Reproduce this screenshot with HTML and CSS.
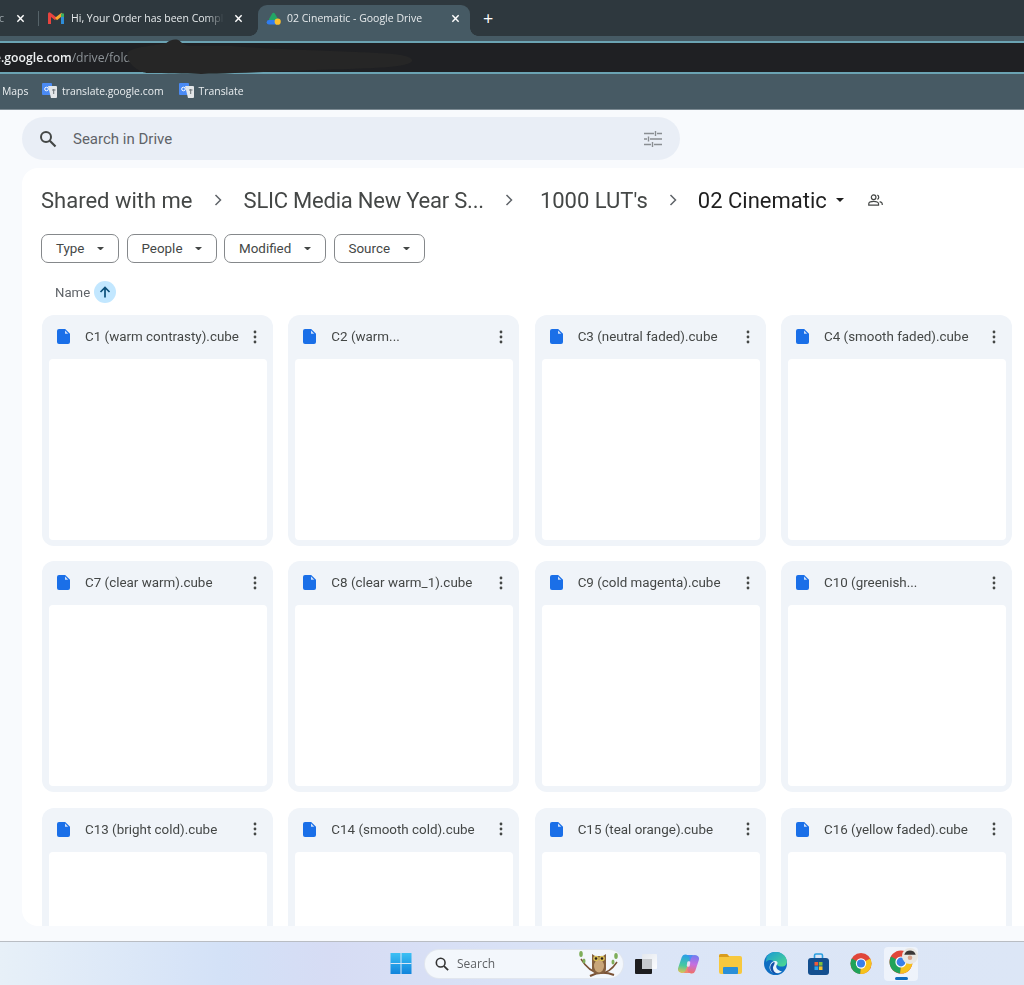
FILE: index.html
```html
<!DOCTYPE html>
<html lang="en">
<head>
<meta charset="utf-8">
<title>02 Cinematic - Google Drive</title>
<link rel="stylesheet" href="styles.css">
</head>
<body>
<svg class="defs" width="0" height="0" aria-hidden="true">
  <defs>
    <linearGradient id="copL" gradientUnits="userSpaceOnUse" x1="8" y1="1" x2="5" y2="20"><stop offset="0" stop-color="#2a9fe8"/><stop offset=".55" stop-color="#45c9a0"/><stop offset="1" stop-color="#f5c147"/></linearGradient>
    <linearGradient id="copR" gradientUnits="userSpaceOnUse" x1="18" y1="1" x2="15" y2="20"><stop offset="0" stop-color="#6f7cf0"/><stop offset=".5" stop-color="#c56fe0"/><stop offset="1" stop-color="#f2705f"/></linearGradient>
    <linearGradient id="edgeG" x1="0" y1="0" x2="1" y2="1"><stop offset="0" stop-color="#1b9ad6"/><stop offset="1" stop-color="#4fdc8c"/></linearGradient>
    <linearGradient id="winG" x1="0" y1="0" x2="0" y2="1"><stop offset="0" stop-color="#3cc0f4"/><stop offset="1" stop-color="#1184dc"/></linearGradient>
    <linearGradient id="backG" x1="0" y1="0" x2="1" y2="1"><stop offset="0" stop-color="#e4e8ee"/><stop offset="1" stop-color="#fbfcfe"/></linearGradient>
  </defs>
  <symbol id="file" viewBox="0 0 13 15"><path d="M2 0h6.200L13 4.800V13a2 2 0 0 1-2 2H2a2 2 0 0 1-2-2V2a2 2 0 0 1 2-2z" fill="#1a6fe8"/><path d="M8 1.500v3.200h3.200z" fill="#cfe0fb"/></symbol>
  <symbol id="kebab" viewBox="0 0 4 14"><circle cx="2" cy="2" r="1.400"/><circle cx="2" cy="7" r="1.400"/><circle cx="2" cy="12" r="1.400"/></symbol>
  <symbol id="caret" viewBox="0 0 8 4"><path d="M0 0h8L4 4z"/></symbol>
  <symbol id="close" viewBox="0 0 10 10"><path d="M1.500 1.500l7 7M8.500 1.500l-7 7" stroke="#fff" stroke-width="1.600" fill="none"/></symbol>
  <symbol id="chev" viewBox="0 0 8 12"><path d="M1.500 1l5 5-5 5" stroke="#5f6368" stroke-width="1.500" fill="none"/></symbol>
  <symbol id="gtrans" viewBox="0 0 15 15"><rect x="0" y="0" width="10" height="12" rx="1" fill="#4a8af4"/><path d="M6 3h8a1 1 0 0 1 1 1v10a1 1 0 0 1-1 1H9z" fill="#e3e6e8"/><circle cx="4.500" cy="6" r="1.800" fill="none" stroke="#fff" stroke-width="1"/><path d="M10 7h3.500M11.700 6v5" stroke="#6b7276" stroke-width="1"/></symbol>
  <symbol id="chrome" viewBox="0 0 24 24"><circle cx="12" cy="12" r="11.500" fill="#e0463a"/><path d="M12 12L22 6.500A11.500 11.500 0 0 1 11 23.500z" fill="#f6c21c"/><path d="M12 12L11 23.500A11.500 11.500 0 0 1 2 6.500z" fill="#1fa35a"/><circle cx="12" cy="12" r="5.600" fill="#fff"/><circle cx="12" cy="12" r="4.400" fill="#3a7fe8"/></symbol>
</svg>

<header class="tabstrip">
  <div class="tab tab-cut"><span class="tab-title">c</span><svg class="tab-x"><use href="#close"/></svg></div>
  <span class="tab-sep"></span>
  <div class="tab tab-mail">
    <svg class="fav" viewBox="0 0 16 13">
      <path d="M1.500 12V1.800L8 7" fill="none" stroke="#e8443f" stroke-width="3" stroke-linejoin="round"/>
      <path d="M8 7l6.500-5.200" fill="none" stroke="#f7a42c" stroke-width="3"/>
      <path d="M14.500 2v10" fill="none" stroke="#2e8cd8" stroke-width="3"/>
      <path d="M14.500 1.500v3.500" fill="none" stroke="#3fae62" stroke-width="3"/>
    </svg>
    <span class="tab-title tab-fade">Hi, Your Order has been Completed</span>
    <svg class="tab-x"><use href="#close"/></svg>
  </div>
  <div class="tab tab-active">
    <svg class="fav" viewBox="0 0 15 13">
      <path d="M7.500 2.200L10.500 7.500H4.500z" fill="#22a565" stroke="#22a565" stroke-width="3" stroke-linejoin="round"/>
      <path d="M3 10.200h7" stroke="#2f7df0" stroke-width="4.600" stroke-linecap="round"/>
      <circle cx="11.700" cy="9.700" r="3.100" fill="#fbc02d"/>
    </svg>
    <span class="tab-title">02 Cinematic - Google Drive</span>
    <svg class="tab-x"><use href="#close"/></svg>
  </div>
  <span class="tab-new">+</span>
</header>

<div class="addr-wrap">
  <div class="addr">
    <span class="url"><b>e.google.com</b>/drive/fold</span>
    <svg class="scribble" viewBox="0 0 300 37" preserveAspectRatio="none"><path d="M2 14C10 8 30 8 42 5c4-3 10-5 14-2 3 3 6 5 14 5h40c40 3 90 4 130 6 20 1 56 1 58 8 1 7-35 8-65 9-50 1-80 3-120 4-40 2-60 0-90 0C14 35-2 24 2 14z" fill="#262626"/></svg>
  </div>
</div>

<nav class="bookmarks">
  <span class="bm bm-maps">Maps</span>
  <span class="bm"><svg class="bm-ico"><use href="#gtrans"/></svg>translate.google.com</span>
  <span class="bm"><svg class="bm-ico"><use href="#gtrans"/></svg>Translate</span>
</nav>

<main class="drive">
  <div class="searchbar">
    <svg class="s-ico" viewBox="0 0 18 18"><circle cx="7" cy="7" r="5" fill="none" stroke="#444746" stroke-width="2"/><path d="M10.800 10.800L16.500 16.500" stroke="#444746" stroke-width="2.200"/></svg>
    <span class="s-text">Search in Drive</span>
    <svg class="s-tune" viewBox="0 0 18 16"><path d="M0 2.500h10M13 2.500h5M11.500 0v5M0 8h3M6 8h12M4.500 5.500v5M0 13.500h7M10 13.500h8M8.500 11v5" stroke="#8a8e92" stroke-width="1.400" fill="none"/></svg>
  </div>

  <section class="panel">
    <div class="crumbs">
      <span class="crumb">Shared with me</span>
      <svg class="chev"><use href="#chev"/></svg>
      <span class="crumb crumb-slic">SLIC Media New Year S...</span>
      <svg class="chev"><use href="#chev"/></svg>
      <span class="crumb crumb-lut">1000 LUT's</span>
      <svg class="chev"><use href="#chev"/></svg>
      <span class="crumb crumb-cur">02 Cinematic</span>
      <svg class="cur-caret"><use href="#caret"/></svg>
      <svg class="people" viewBox="0 0 16 13"><circle cx="6" cy="3.500" r="2.500" fill="none" stroke="#444746" stroke-width="1.300"/><path d="M.7 12v-1.500C.7 8.800 3 8 6 8s5.300.8 5.300 2.500V12z" fill="none" stroke="#444746" stroke-width="1.300"/><path d="M10 1.200a2.500 2.500 0 0 1 0 4.600M12.500 8.300c1.700.5 2.800 1.200 2.800 2.300V12" fill="none" stroke="#444746" stroke-width="1.300"/></svg>
    </div>

    <div class="filters">
      <button class="chip chip-type">Type<svg class="chip-caret"><use href="#caret"/></svg></button>
      <button class="chip chip-people">People<svg class="chip-caret"><use href="#caret"/></svg></button>
      <button class="chip chip-mod">Modified<svg class="chip-caret"><use href="#caret"/></svg></button>
      <button class="chip chip-src">Source<svg class="chip-caret"><use href="#caret"/></svg></button>
    </div>

    <div class="sort">
      <span>Name</span>
      <span class="sort-btn"><svg viewBox="0 0 12 12"><path d="M6 11.500V1.500M1.500 6L6 1.500 10.500 6" fill="none" stroke="#0b4f7a" stroke-width="1.700"/></svg></span>
    </div>

    <div class="grid">
      <article class="card"><div class="card-h"><svg class="f"><use href="#file"/></svg><span class="card-t">C1 (warm contrasty).cube</span><svg class="k"><use href="#kebab"/></svg></div><div class="thumb"></div></article>
      <article class="card"><div class="card-h"><svg class="f"><use href="#file"/></svg><span class="card-t">C2 (warm...</span><svg class="k"><use href="#kebab"/></svg></div><div class="thumb"></div></article>
      <article class="card"><div class="card-h"><svg class="f"><use href="#file"/></svg><span class="card-t">C3 (neutral faded).cube</span><svg class="k"><use href="#kebab"/></svg></div><div class="thumb"></div></article>
      <article class="card"><div class="card-h"><svg class="f"><use href="#file"/></svg><span class="card-t">C4 (smooth faded).cube</span><svg class="k"><use href="#kebab"/></svg></div><div class="thumb"></div></article>
      <article class="card"><div class="card-h"><svg class="f"><use href="#file"/></svg><span class="card-t">C7 (clear warm).cube</span><svg class="k"><use href="#kebab"/></svg></div><div class="thumb"></div></article>
      <article class="card"><div class="card-h"><svg class="f"><use href="#file"/></svg><span class="card-t">C8 (clear warm_1).cube</span><svg class="k"><use href="#kebab"/></svg></div><div class="thumb"></div></article>
      <article class="card"><div class="card-h"><svg class="f"><use href="#file"/></svg><span class="card-t">C9 (cold magenta).cube</span><svg class="k"><use href="#kebab"/></svg></div><div class="thumb"></div></article>
      <article class="card"><div class="card-h"><svg class="f"><use href="#file"/></svg><span class="card-t">C10 (greenish...</span><svg class="k"><use href="#kebab"/></svg></div><div class="thumb"></div></article>
      <article class="card"><div class="card-h"><svg class="f"><use href="#file"/></svg><span class="card-t">C13 (bright cold).cube</span><svg class="k"><use href="#kebab"/></svg></div><div class="thumb"></div></article>
      <article class="card"><div class="card-h"><svg class="f"><use href="#file"/></svg><span class="card-t">C14 (smooth cold).cube</span><svg class="k"><use href="#kebab"/></svg></div><div class="thumb"></div></article>
      <article class="card"><div class="card-h"><svg class="f"><use href="#file"/></svg><span class="card-t">C15 (teal orange).cube</span><svg class="k"><use href="#kebab"/></svg></div><div class="thumb"></div></article>
      <article class="card"><div class="card-h"><svg class="f"><use href="#file"/></svg><span class="card-t">C16 (yellow faded).cube</span><svg class="k"><use href="#kebab"/></svg></div><div class="thumb"></div></article>
    </div>
  </section>
</main>

<footer class="taskbar">
  <svg class="tb-win" viewBox="0 0 21 21"><rect width="21" height="21" fill="url(#winG)"/><path d="M10.500 0v21M0 10.500h21" stroke="#dbe7f6" stroke-width="1"/></svg>
  <div class="tb-search">
    <svg class="tb-s-ico" viewBox="0 0 16 16"><circle cx="6.500" cy="6.500" r="5" fill="none" stroke="#333" stroke-width="1.800"/><path d="M10.300 10.300L15 15" stroke="#333" stroke-width="2"/></svg>
    <span class="tb-s-text">Search</span>
    <svg class="tb-owl" viewBox="0 0 42 26">
      <path d="M3 8c5 8 10 13 18 14s14-5 18-11" fill="none" stroke="#7a5235" stroke-width="1.500"/>
      <path d="M12 25c8-4 16-4 24-1" fill="none" stroke="#7a5235" stroke-width="2"/>
      <ellipse cx="3" cy="3" rx="1.800" ry="3" fill="#7fae5a"/><ellipse cx="38" cy="5" rx="1.800" ry="3" fill="#7fae5a"/><ellipse cx="6" cy="10" rx="1.500" ry="2.500" fill="#7fae5a"/><ellipse cx="35" cy="11" rx="1.500" ry="2.500" fill="#7fae5a"/>
      <path d="M14 3l3 2h8l3-2v15c0 3-3 5-7 5s-7-2-7-5z" fill="#84603f"/>
      <ellipse cx="21" cy="15" rx="5" ry="6.500" fill="#c9a67a"/>
      <circle cx="18" cy="7.500" r="2.800" fill="#d9bf58"/><circle cx="24" cy="7.500" r="2.800" fill="#d9bf58"/><circle cx="18" cy="7.500" r="1.300" fill="#2d2118"/><circle cx="24" cy="7.500" r="1.300" fill="#2d2118"/>
    </svg>
  </div>
  <svg class="tb-i tb-task" viewBox="0 0 22 20"><rect x="7" y="0" width="15" height="15" rx="1" fill="url(#backG)"/><rect x="0" y="5" width="17" height="15" rx="1" fill="#1d1d1f"/><rect x="7" y="5" width="10" height="10" fill="#c6c9cd"/></svg>
  <svg class="tb-i tb-cop" viewBox="0 0 23 20">
    <path d="M9 4.500h6" stroke="#4b8df0" stroke-width="7" stroke-linecap="round"/>
    <path d="M8 15.500h6" stroke="#f08a6c" stroke-width="7" stroke-linecap="round"/>
    <path d="M8.500 4.500L5 15" stroke="url(#copL)" stroke-width="8" stroke-linecap="round"/>
    <path d="M18 5L14.500 15.500" stroke="url(#copR)" stroke-width="8" stroke-linecap="round"/>
    <path d="M11.500 8.500L12 8.500 11.500 11.500 11 11.500z" stroke="#e9def5" stroke-width="2.500" stroke-linejoin="round"/>
  </svg>
  <svg class="tb-i tb-exp" viewBox="0 0 23 20"><path d="M0 2a2 2 0 0 1 2-2h6l2 2h11a2 2 0 0 1 2 2v14a2 2 0 0 1-2 2H2a2 2 0 0 1-2-2z" fill="#f7c83e"/><path d="M0 2a2 2 0 0 1 2-2h6l2.500 3H0z" fill="#d99c1f"/><rect x="4" y="13" width="15" height="7" rx="1" fill="#2a8fd8"/></svg>
  <svg class="tb-i tb-edge" viewBox="0 0 23 23">
    <circle cx="11.500" cy="11.500" r="11.500" fill="#0f6ec2"/>
    <path d="M2.500 5C6-1.500 17-2 21.500 5c2.500 4 1.500 9-2.500 9.500-3 .4-5.500-.5-6.500-2-.5-1-3-5-7-4.500C3.800 8.300 3 9 2 10z" fill="url(#edgeG)"/>
    <path d="M11 9c2 0 3.500 1.500 2 3.500-2 2.500 0 6 5 7-3 2.500-9 2.500-11.500-1C4 15 7 9 11 9z" fill="#eaf4fb"/>
    <path d="M10.500 10c-3 .5-5 4-4 7.500 1 3 4 5 7.500 4.500-3-1-5-3-5-6 0-2.500 2-3 1.500-6z" fill="#1450a8"/>
  </svg>
  <svg class="tb-i tb-store" viewBox="0 0 21 22"><path d="M6.500 6V2.500A1.500 1.500 0 0 1 8 1h5a1.500 1.500 0 0 1 1.500 1.500V6" fill="none" stroke="#2a9fe0" stroke-width="1.600"/><rect x="0" y="5" width="21" height="17" rx="3" fill="#144f8f"/><rect x="6.500" y="9" width="3.600" height="3.600" fill="#ef5b3a"/><rect x="10.900" y="9" width="3.600" height="3.600" fill="#7fbf3f"/><rect x="6.500" y="13.400" width="3.600" height="3.600" fill="#2aa5ec"/><rect x="10.900" y="13.400" width="3.600" height="3.600" fill="#f8c22e"/></svg>
  <svg class="tb-i tb-chrome"><use href="#chrome"/></svg>
  <div class="tb-active">
    <svg class="tb-chrome2"><use href="#chrome"/></svg>
    <svg class="tb-badge" viewBox="0 0 14 14"><circle cx="7" cy="7" r="7" fill="#e9e7e2"/><path d="M2 6c1-5 9-5 10 0z" fill="#3b3735"/><circle cx="7" cy="8.500" r="2" fill="#d9a38a"/></svg>
    <span class="tb-ind"></span>
  </div>
</footer>
</body>
</html>
```

FILE: styles.css
```css
* { box-sizing: border-box; }
html, body { margin: 0; height: 985px; overflow: hidden; }
body {
  width: 1024px;
  display: flex;
  flex-direction: column;
  font-family: Roboto, "Liberation Sans", sans-serif;
  background: #f8fafd;
  color: #444746;
}
.defs { position: absolute; }

/* Browser chrome */
.tabstrip {
  height: 36px;
  flex: none;
  background: #2e383e;
  display: flex;
  align-items: flex-end;
  color: #e6eaec;
  font: 10.5px "Open Sans", "Liberation Sans", sans-serif;
}
.tab { height: 31px; display: flex; align-items: center; position: relative; padding-bottom: 5px; }
.tab > * { filter: blur(.3px); }
.tab-title { white-space: nowrap; overflow: hidden; }
.tab-x { width: 9px; height: 9px; flex: none; }
.fav { flex: none; }
.tab-cut { width: 37px; }
.tab-cut .tab-title { width: 17px; color: #9aa3a8; margin-left: -1px; }
.tab-sep { width: 1px; height: 15px; background: #566369; margin: 0 0 10px 1px; }
.tab-mail { width: 219px; padding-left: 9px; }
.tab-mail .fav { width: 16px; height: 13px; margin-right: 7px; }
.tab-fade {
  width: 153px;
  margin-right: 10px;
  -webkit-mask-image: linear-gradient(90deg, #000 88%, transparent);
  mask-image: linear-gradient(90deg, #000 88%, transparent);
}
.tab-active {
  width: 212px;
  background: #465a64;
  border-radius: 9px 9px 0 0;
  padding-left: 8px;
}
.tab-active::before,
.tab-active::after {
  content: "";
  position: absolute;
  bottom: 0;
  width: 8px;
  height: 8px;
}
.tab-active::before { left: -8px; background: radial-gradient(circle at 0 0, transparent 7.5px, #465a64 8px); }
.tab-active::after { right: -8px; background: radial-gradient(circle at 100% 0, transparent 7.5px, #465a64 8px); }
.tab-active .fav { width: 15px; height: 13px; margin-right: 6px; }
.tab-active .tab-title { width: 164px; }
.tab-new { color: #fff; font-size: 18px; line-height: 26px; margin-left: 13px; height: 31px; }

.addr-wrap {
  flex: none;
  height: 38px;
  background: #465a64;
  padding-top: 5px;
}
.addr {
  height: 33px;
  background: #1f2023;
  border-top: 2px solid #6ba3b3;
  border-bottom: 2px solid #6ba3b3;
  display: flex;
  align-items: center;
  position: relative;
  font: 12.2px "Open Sans", "Liberation Sans", sans-serif;
  color: #8e9499;
}
.url { margin-left: -6px; white-space: nowrap; filter: blur(.3px); }
.url b { color: #eef0f1; font-weight: 600; }
.scribble {
  position: absolute;
  left: 126px;
  top: -5px;
  width: 288px;
  height: 37px;
  filter: blur(.5px);
}

.bookmarks {
  flex: none;
  height: 36px;
  background: #475a64;
  border-bottom: 1px solid #7c8a92;
  display: flex;
  align-items: center;
  padding-bottom: 2px;
  color: #eaeef0;
  font: 10.4px "Open Sans", "Liberation Sans", sans-serif;
}
.bm { display: flex; align-items: center; white-space: nowrap; filter: blur(.3px); }
.bm-maps { margin-left: 2px; width: 40px; }
.bm + .bm + .bm { margin-left: 15px; }
.bm-ico { width: 15px; height: 15px; margin-right: 5px; flex: none; }

/* Drive */
.drive { flex: none; height: 831px; padding: 7px 0 15px 22px; display: flex; flex-direction: column; filter: blur(.3px); }
.searchbar {
  width: 658px;
  height: 43px;
  flex: none;
  border-radius: 22px;
  background: #e9eef6;
  display: flex;
  align-items: center;
  padding: 0 18px 0 17px;
}
.s-ico { width: 18px; height: 18px; margin-right: 16px; flex: none; }
.s-text { font-size: 15px; color: #5f6368; flex: 1; padding-top: 1px; }
.s-tune { width: 18px; height: 16px; }
.panel {
  margin-top: 8px;
  flex: 1;
  min-height: 0;
  background: #fff;
  border-radius: 16px 0 0 16px;
  overflow: hidden;
  padding: 0 0 0 19px;
}
.crumbs { height: 66px; display: flex; align-items: center; padding-bottom: 2px; }
.crumb { font-size: 22px; color: #444746; white-space: nowrap; }
.crumb-slic { letter-spacing: -.22px; }
.crumb-lut { margin-left: 5px; }
.crumb-cur { color: #1f1f1f; margin-left: -1px; }
.chev { width: 8px; height: 12px; margin: 0 22px 0 21px; flex: none; }
.cur-caret { width: 8px; height: 4px; margin-left: 9px; fill: #1f1f1f; }
.people { width: 15px; height: 12px; margin-left: 24px; }

.filters { display: flex; gap: 7.5px; height: 29px; }
.chip {
  height: 29px;
  padding: 0 0 0 14px;
  border: 1px solid #85888b;
  border-radius: 7px;
  background: #fff;
  color: #444746;
  font: 400 13.4px Roboto, "Liberation Sans", sans-serif;
  display: flex;
  align-items: center;
  gap: 13px;
}
.chip-caret { width: 7px; height: 3.5px; fill: #444746; }
.chip-type { width: 78px; }
.chip-people { width: 90px; }
.chip-mod { width: 102px; }
.chip-src { width: 91px; }

.sort {
  height: 52px;
  padding: 6px 0 0 14px;
  display: flex;
  align-items: center;
  gap: 4px;
  font: 400 13.2px Roboto, "Liberation Sans", sans-serif;
  color: #5f6368;
}
.sort-btn {
  width: 22px;
  height: 22px;
  border-radius: 50%;
  background: #c2e7ff;
  display: flex;
  align-items: center;
  justify-content: center;
}
.sort-btn svg { width: 12px; height: 12px; }

.grid {
  margin-left: 1px;
  display: grid;
  grid-template-columns: repeat(4, 231px);
  grid-auto-rows: 231px;
  column-gap: 15.33px;
  row-gap: 15.4px;
}
.card {
  background: #f0f4f9;
  border-radius: 12px;
  padding: 0 6px 6px 7px;
  display: flex;
  flex-direction: column;
}
.card-h { height: 44px; flex: none; display: flex; align-items: center; padding: 0 10px 1px 8px; }
.f { width: 13px; height: 15px; flex: none; margin-right: 15px; }
.card-t { flex: 1; font: 400 13.4px Roboto, "Liberation Sans", sans-serif; color: #444746; white-space: nowrap; }
.k { width: 4px; height: 14px; fill: #444746; flex: none; }
.thumb { flex: 1; background: #fff; border-radius: 4px; }

/* Taskbar */
.taskbar {
  flex: none;
  height: 44px;
  border-top: 1px solid #b9bdc3;
  background: linear-gradient(90deg, #e7f0f8 0%, #d3e1f7 22%, #d6dcf4 32%, #dbe5f7 60%, #dce6f6 100%);
  display: flex;
  align-items: center;
  padding-left: 390px;
  position: relative;
}
.taskbar > * { filter: blur(.35px); }
.tb-win { width: 22px; height: 21px; flex: none; }
.tb-search {
  margin-left: 13px;
  width: 198px;
  height: 28px;
  border-radius: 14px;
  background: #f3f7fc;
  box-shadow: 0 0 0 1px #e1e6ee;
  display: flex;
  align-items: center;
  padding-left: 10px;
  font: 12px "Open Sans", "Liberation Sans", sans-serif;
  color: #5e6164;
}
.tb-s-ico { width: 14px; height: 14px; margin-right: 8px; }
.tb-s-text { flex: 1; }
.tb-owl { width: 42px; height: 26px; margin-right: 3px; }
.tb-i { flex: none; }
.tb-task { width: 22px; height: 20px; margin-left: 12px; }
.tb-cop { width: 23px; height: 20px; margin-left: 20px; }
.tb-exp { width: 23px; height: 20px; margin-left: 19px; }
.tb-edge { width: 23px; height: 23px; margin-left: 22px; }
.tb-store { width: 21px; height: 22px; margin-left: 21px; }
.tb-chrome { width: 22px; height: 23px; margin-left: 21px; }
.tb-active {
  width: 34px;
  height: 34px;
  margin-left: 12px;
  background: #eef3fb;
  border-radius: 4px;
  position: relative;
  display: flex;
  align-items: center;
  justify-content: center;
}
.tb-chrome2 { width: 24px; height: 24px; margin-top: -3px; }
.tb-badge { position: absolute; right: 0; top: 1px; width: 16px; height: 16px; }
.tb-ind { position: absolute; left: 11px; bottom: 1px; width: 13px; height: 3px; border-radius: 2px; background: #0f6cbd; }
```
